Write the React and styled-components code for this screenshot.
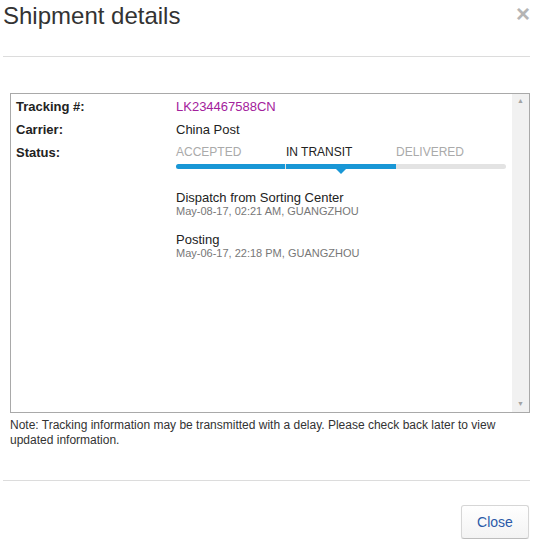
import React from 'react'
import styled, { createGlobalStyle } from 'styled-components'

const GlobalStyle = createGlobalStyle`
    body {
        margin: 0;
        background: #fff;
        font-family: "Liberation Sans", Arial, sans-serif;
        color: #222;
    }
`

const steps = [
    { label: 'ACCEPTED', done: true },
    { label: 'IN TRANSIT', done: true, current: true },
    { label: 'DELIVERED', done: false },
]

const events = [
    { title: 'Dispatch from Sorting Center', meta: 'May-08-17, 02:21 AM, GUANGZHOU' },
    { title: 'Posting', meta: 'May-06-17, 22:18 PM, GUANGZHOU' },
]

function App() {
    return (
        <Dialog>
            <GlobalStyle />
            <Header>
                <Title>Shipment details</Title>
                <CloseX>×</CloseX>
            </Header>
            <Body>
                <Panel>
                    <PanelContent>
                        <Row>
                            <Label>Tracking #:</Label>
                            <TrackingNo>LK234467588CN</TrackingNo>
                        </Row>
                        <Row>
                            <Label>Carrier:</Label>
                            <Value>China Post</Value>
                        </Row>
                        <Row>
                            <Label>Status:</Label>
                            <Value>
                                <Steps>
                                    {steps.map((s) => (
                                        <Step key={s.label} $current={s.current}>{s.label}</Step>
                                    ))}
                                </Steps>
                                <Bar>
                                    {steps.map((s) => (
                                        <Segment key={s.label} $done={s.done}>
                                            {s.current && <Pointer />}
                                        </Segment>
                                    ))}
                                </Bar>
                                <Events>
                                    {events.map((e) => (
                                        <Event key={e.meta}>
                                            <EventTitle>{e.title}</EventTitle>
                                            <EventMeta>{e.meta}</EventMeta>
                                        </Event>
                                    ))}
                                </Events>
                            </Value>
                        </Row>
                    </PanelContent>
                    <Scrollbar>
                        <ScrollArrow>▲</ScrollArrow>
                        <ScrollArrow>▼</ScrollArrow>
                    </Scrollbar>
                </Panel>
                <Note>
                    Note: Tracking information may be transmitted with a delay. Please check back later to view updated information.
                </Note>
            </Body>
            <Footer>
                <CloseButton>Close</CloseButton>
            </Footer>
        </Dialog>
    )
}

export default App

const Dialog = styled.div`
    width: 533px;
    height: 539px;
    overflow: hidden;
`
const Header = styled.div`
    height: 56px;
    margin: 0 3px;
    border-bottom: 1px solid #dcdcdc;
    display: flex;
    justify-content: space-between;
    align-items: flex-start;
`
const Title = styled.h1`
    margin: 2px 0 0 0;
    font-size: 24px;
    font-weight: normal;
    line-height: 28px;
    color: #333;
`
const CloseX = styled.span`
    font-size: 24px;
    font-weight: bold;
    line-height: 28px;
    color: #b5b5b5;
`
const Body = styled.div`
    margin: 0 3px;
    padding: 36px 0 0 7px;
    height: 424px;
    box-sizing: border-box;
    border-bottom: 1px solid #dcdcdc;
`
const Panel = styled.div`
    height: 320px;
    box-sizing: border-box;
    border: 1px solid #a9a9a9;
    display: flex;
`
const PanelContent = styled.div`
    flex: 1;
    padding: 1px 6px 0 5px;
`
const Row = styled.div`
    display: flex;
    font-size: 13px;
    line-height: 23px;
`
const Label = styled.div`
    width: 160px;
    font-weight: bold;
    color: #222;
`
const Value = styled.div`
    flex: 1;
    color: #222;
`
const TrackingNo = styled(Value)`
    color: #a3219c;
`
const Steps = styled.div`
    display: flex;
    font-size: 12px;
`
const Step = styled.div`
    width: 110px;
    color: ${(p) => (p.$current ? '#222' : '#aaa')};
`
const Bar = styled.div`
    display: flex;
    gap: 1px;
    width: 330px;
    height: 5px;
    border-radius: 3px;
    background: #e3e3e3;
`
const Segment = styled.div`
    position: relative;
    flex: 1;
    background: ${(p) => (p.$done ? '#1997d6' : 'transparent')};
    &:first-child { border-radius: 3px 0 0 3px; }
    &:last-child { border-radius: 0 3px 3px 0; }
`
const Pointer = styled.span`
    position: absolute;
    left: 50%;
    top: 5px;
    margin-left: -5px;
    border-left: 5px solid transparent;
    border-right: 5px solid transparent;
    border-top: 5px solid #1997d6;
`
const Events = styled.div`
    margin-top: 21px;
    display: flex;
    flex-direction: column;
    gap: 14px;
`
const Event = styled.div`
    display: flex;
    flex-direction: column;
`
const EventTitle = styled.div`
    font-size: 13px;
    line-height: 15px;
    color: #222;
`
const EventMeta = styled.div`
    font-size: 11px;
    line-height: 13px;
    color: #777;
`
const Scrollbar = styled.div`
    width: 17px;
    background: #f1f1f1;
    display: flex;
    flex-direction: column;
    justify-content: space-between;
    align-items: center;
    padding: 2px 0 3px;
`
const ScrollArrow = styled.span`
    font-size: 7px;
    color: #a3a3a3;
    line-height: 10px;
`
const Note = styled.p`
    margin: 5px 0 0 0;
    font-size: 12px;
    line-height: 15px;
    color: #333;
`
const Footer = styled.div`
    display: flex;
    justify-content: flex-end;
    padding: 24px 4px 0 0;
`
const CloseButton = styled.button`
    width: 68px;
    height: 34px;
    font-family: "Liberation Sans", Arial, sans-serif;
    font-size: 14px;
    color: #2b5aa8;
    background: linear-gradient(#ffffff, #f3f3f3);
    border: 1px solid #d6d6d6;
    border-bottom-color: #bdbdbd;
    border-radius: 3px;
    box-shadow: 0 1px 1px rgba(0, 0, 0, 0.08);
`
